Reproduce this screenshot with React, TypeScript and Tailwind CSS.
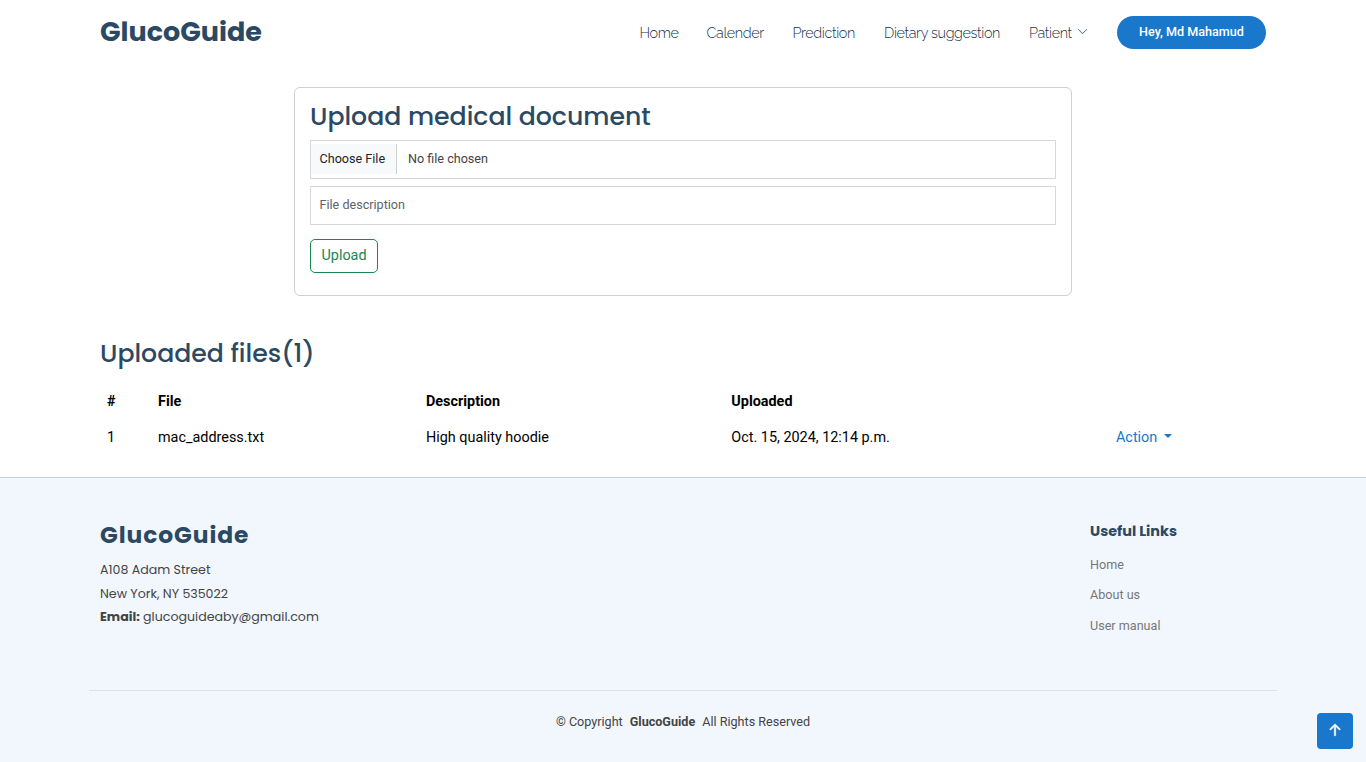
import React from 'react';
import { BsChevronDown, BsArrowUpShort } from 'react-icons/bs';

const heading = "font-[Poppins,Inter,sans-serif] text-[#2c4964]";
const navLink = "block whitespace-nowrap";

function Header() {
  return (
    <header className="flex h-[64px] items-center justify-between pr-[100px] pl-[100px]">
      <a className={`${heading} text-[27px] leading-[32px] font-bold`}>GlucoGuide</a>
      <div className="flex items-center">
        <nav className="flex items-center pt-[2px] font-[Raleway,Lato,sans-serif] text-[14.4px] leading-[20px] font-light tracking-[-0.36px] text-[#12304d]">
          <a className={`${navLink} w-[67px]`}>Home</a>
          <a className={`${navLink} w-[86px]`}>Calender</a>
          <a className={`${navLink} w-[91.5px]`}>Prediction</a>
          <a className={`${navLink} w-[145px]`}>Dietary suggestion</a>
          <a className="flex w-[88px] items-center text-[#25323e]">
            <span className="w-[48px]">Patient</span>
            <BsChevronDown className="-mt-[3px] size-[11px] text-[#2c6496]" />
          </a>
        </nav>
        <a className="flex h-[33px] w-[149px] items-center justify-center rounded-full bg-[#1977cc] text-[12.6px] font-medium whitespace-nowrap text-white">
          Hey, Md Mahamud
        </a>
      </div>
    </header>
  );
}

function UploadCard() {
  return (
    <section className="mx-auto mt-[23px] h-[209px] w-[778px] rounded-[6px] border border-[#ced0d1] px-[15px] pt-[14px]">
      <h2 className={`${heading} text-[25.2px] leading-[30px] font-medium`}>Upload medical document</h2>
      <div className="mt-[8px] flex h-[39px] items-start border border-[#d6d8da] pt-[3px] text-[12.6px]">
        <span className="flex h-[30px] w-[86px] items-center border-r border-[#ced0d2] bg-[#f8f9fa] pl-[8.5px] text-[#212529]">Choose File</span>
        <span className="flex h-[30px] items-center pl-[11px] text-[#444444]">No file chosen</span>
      </div>
      <div className="mt-[7px] flex h-[39px] items-center border border-[#d6d8da] pl-[8.5px] text-[12.6px] text-[#5c636a]">File description</div>
      <button className="mt-[14px] flex h-[34px] w-[68px] items-center justify-center rounded-[5px] border border-[#198754] text-[14.4px] text-[#198754]">Upload</button>
    </section>
  );
}

function Files() {
  return (
    <section className="px-[100px] pt-[43px]">
      <h2 className={`${heading} text-[25.2px] leading-[30px] font-medium`}>Uploaded files(1)</h2>
      <div className="mt-[15px] grid grid-cols-[51px_268px_305.3px_384.7px_1fr] pl-[7px] text-[14.4px] leading-[36px] text-black">
        <b>#</b>
        <b>File</b>
        <b>Description</b>
        <b>Uploaded</b>
        <b />
        <span>1</span>
        <span>mac_address.txt</span>
        <span>High quality hoodie</span>
        <span>Oct. 15, 2024, 12:14 p.m.</span>
        <span className="flex items-center gap-[7px] text-[#1977cc]">
          Action
          <span className="-mt-[4px] h-0 w-0 border-x-[4px] border-t-[4px] border-x-transparent border-t-[#1977cc]" />
        </span>
      </div>
    </section>
  );
}

function Footer() {
  return (
    <footer className="mt-[21px] h-[285px] border-t border-[#bbd1e9] bg-[#f2f7fe] text-[#444444]">
      <div className="mx-[89px] flex h-[213px] justify-between border-b border-[#dde3e9] pr-[100px] pl-[11px]">
        <div className="pt-[44px] font-[Poppins,Inter,sans-serif] text-[12.6px] leading-[23.6px]">
          <h3 className={`${heading} mb-[10px] text-[23.4px] leading-[26px] font-bold tracking-[0.9px]`}>GlucoGuide</h3>
          <p>A108 Adam Street</p>
          <p>New York, NY 535022</p>
          <p><b>Email:</b> <span>glucoguideaby@gmail.com</span></p>
        </div>
        <div className="w-[87px] pt-[43px] text-[12.6px] leading-[30.4px] text-[#777777]">
          <h4 className={`${heading} mb-[8.8px] text-[14.4px] leading-[20px] font-bold whitespace-nowrap`}>Useful Links</h4>
          <p>Home</p>
          <p>About us</p>
          <p>User manual</p>
        </div>
      </div>
      <p className="flex justify-center gap-[7px] pt-[21px] text-[12.6px] leading-[20px]">
        <span>© Copyright</span>
        <b>GlucoGuide</b>
        <span>All Rights Reserved</span>
      </p>
    </footer>
  );
}

export default function App() {
  return (
    <div className="h-[762px] w-[1366px] overflow-hidden bg-white font-[Roboto,sans-serif]">
      <Header />
      <UploadCard />
      <Files />
      <Footer />
      <button className="fixed right-[13px] bottom-[13px] flex size-[36px] items-center justify-center rounded-[4px] bg-[#1977cc] pb-[2px] text-white">
        <BsArrowUpShort className="size-[24px]" strokeWidth={0.3} />
      </button>
    </div>
  );
}
